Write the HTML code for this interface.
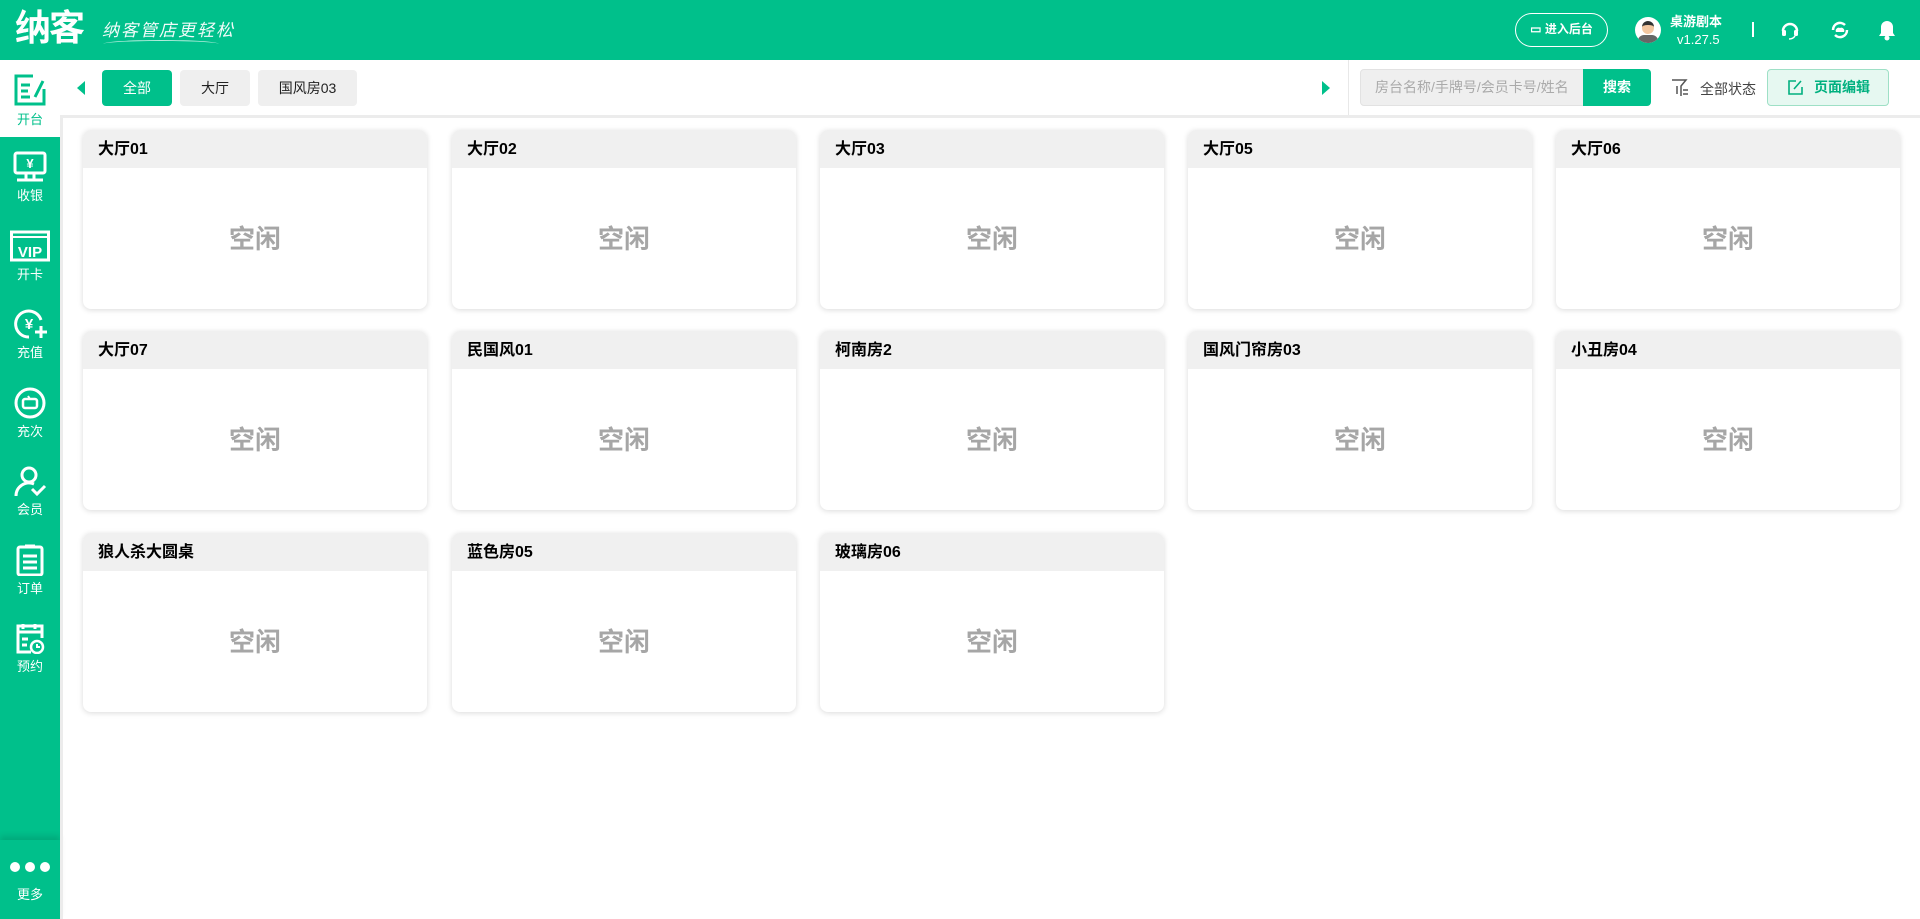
<!DOCTYPE html>
<html><head><meta charset="utf-8"><style>
*{margin:0;padding:0;box-sizing:border-box}
body{width:1920px;height:919px;overflow:hidden;background:#fff;font-family:"Liberation Sans","Noto Sans CJK SC",sans-serif;position:relative}
.hdr{position:absolute;left:0;top:0;width:1920px;height:60px;background:#00c08b;color:#fff}
.side{position:absolute;left:0;top:60px;width:60px;height:859px;background:#00c08b}
.si{position:absolute;left:0;width:60px;height:78px;text-align:center;color:#fff;font-size:13px}
.si svg{display:block;margin:6px auto 2px}
.more{position:absolute;left:0;top:840px;width:60px;height:79px;background:#00c08b;box-shadow:0 -4px 6px rgba(0,0,0,.12);text-align:center;color:#fff;font-size:13px}
.strip{position:absolute;left:60px;top:115px;width:3px;height:804px;background:#ececec}
.topline{position:absolute;left:60px;top:115px;width:1860px;height:3px;background:#ececec}
.tab{position:absolute;top:70px;height:36px;border-radius:4px;font-size:14px;line-height:36px;text-align:center;background:#efefef;color:#222}
.card{position:absolute;width:344px;height:179px;border-radius:8px;background:#fff;box-shadow:0 1px 6px rgba(0,0,0,.15);overflow:hidden}
.card .h{height:38px;background:#f0f0f0;font-weight:bold;font-size:16px;line-height:40px;padding-left:15px;color:#000}
.card .b{text-align:center;font-size:26px;font-weight:bold;color:#a6a6a6;line-height:143px}
</style></head><body>
<div class="hdr">
 <div style="position:absolute;left:15px;top:8px;font-size:36px;font-weight:bold;letter-spacing:-2px;line-height:40px">纳客</div>
 <div style="position:absolute;left:102px;top:16px;font-size:17px;font-style:italic;letter-spacing:2px;opacity:.95">纳客管店更轻松</div>
 <div style="position:absolute;left:103px;top:40px;width:116px;height:8px;border-top:1px solid rgba(255,255,255,.7);border-radius:50% 50% 0 0"></div>
 <div style="position:absolute;left:1515px;top:13px;width:93px;height:34px;border:1.5px solid #fff;border-radius:17px;font-size:12px;font-weight:bold;line-height:31px;text-align:center">▭ 进入后台</div>
 <div style="position:absolute;left:1635px;top:17px;width:26px;height:26px;border-radius:50%;background:#fff;overflow:hidden"><div style="position:absolute;left:7px;top:4px;width:12px;height:13px;border-radius:6px;background:#f2c6a0;border-top:4px solid #333"></div><div style="position:absolute;left:3px;top:18px;width:20px;height:12px;border-radius:8px;background:#666"></div></div>
 <div style="position:absolute;left:1670px;top:11px;font-size:13px;font-weight:bold">桌游剧本</div>
 <div style="position:absolute;left:1677px;top:32px;font-size:13px">v1.27.5</div>
 <div style="position:absolute;left:1752px;top:22px;width:2px;height:15px;background:#fff"></div>
 <svg style="position:absolute;left:1780px;top:20px" width="20" height="20" viewBox="0 0 20 20"><path d="M3 11a7 7 0 0114 0" stroke="#fff" stroke-width="2.5" fill="none"/><rect x="2" y="10" width="4" height="6" rx="1.5" fill="#fff"/><rect x="14" y="10" width="4" height="6" rx="1.5" fill="#fff"/><path d="M15 16q-2 3-6 3" stroke="#fff" stroke-width="1.5" fill="none"/></svg>
 <svg style="position:absolute;left:1830px;top:20px" width="20" height="20" viewBox="0 0 20 20"><path d="M3 10a7 7 0 0112-5M17 10a7 7 0 01-12 5" stroke="#fff" stroke-width="2.5" fill="none"/><path d="M6 12a3 3 0 014-4 3 3 0 014 4z" fill="#fff"/></svg>
 <svg style="position:absolute;left:1878px;top:19px" width="18" height="22" viewBox="0 0 18 22"><path d="M9 2a6 6 0 00-6 6v6l-2 3h16l-2-3V8a6 6 0 00-6-6z" fill="#fff"/><circle cx="9" cy="19" r="2.5" fill="#fff"/></svg>
</div>
<div class="side">
 <div class="si" style="top:0;background:#fff;color:#00c08b;height:77px"><svg width="34" height="34" viewBox="0 0 34 34" style="margin-top:13px"><path d="M20 3H3v28h28V16" stroke="#00c08b" stroke-width="3" fill="none"/><path d="M8 12h9M8 18h7M8 24h9M22 24l8-16" stroke="#00c08b" stroke-width="3" fill="none"/></svg>开台</div>
 <div class="si" style="top:85px"><svg width="34" height="32" viewBox="0 0 34 32"><rect x="2" y="2" width="30" height="20" rx="2" stroke="#fff" stroke-width="3" fill="none"/><text x="17" y="17" font-size="13" font-weight="bold" fill="#fff" text-anchor="middle">¥</text><path d="M13 22v6M21 22v6M4 29h26" stroke="#fff" stroke-width="3"/></svg>收银</div>
 <div class="si" style="top:164px"><svg width="40" height="32" viewBox="0 0 40 32"><rect x="1.5" y="2" width="37" height="28" stroke="#fff" stroke-width="3" fill="none"/><path d="M2 7h36" stroke="#fff" stroke-width="2"/><text x="20" y="27" font-size="15" font-weight="bold" fill="#fff" text-anchor="middle">VIP</text></svg>开卡</div>
 <div class="si" style="top:242px"><svg width="34" height="32" viewBox="0 0 34 32"><path d="M28 12A13 13 0 1016 29" stroke="#fff" stroke-width="3" fill="none"/><text x="16" y="21" font-size="15" font-weight="bold" fill="#fff" text-anchor="middle">¥</text><path d="M28 18v12M22 24h12" stroke="#fff" stroke-width="3"/></svg>充值</div>
 <div class="si" style="top:321px"><svg width="34" height="32" viewBox="0 0 34 32"><circle cx="17" cy="16" r="14" stroke="#fff" stroke-width="3" fill="none"/><rect x="10" y="12" width="14" height="9" rx="2" stroke="#fff" stroke-width="2.5" fill="none"/><path d="M15 9l2 3" stroke="#fff" stroke-width="2"/></svg>充次</div>
 <div class="si" style="top:399px"><svg width="34" height="32" viewBox="0 0 34 32"><circle cx="16" cy="10" r="7" stroke="#fff" stroke-width="3" fill="none"/><path d="M3 31a13 13 0 0118-12M19 24l5 5 8-8" stroke="#fff" stroke-width="3" fill="none"/></svg>会员</div>
 <div class="si" style="top:478px"><svg width="34" height="32" viewBox="0 0 34 32"><rect x="5" y="3" width="24" height="28" rx="2" stroke="#fff" stroke-width="3" fill="none"/><path d="M12 2h10M10 12h14M10 18h14M10 24h14" stroke="#fff" stroke-width="3"/></svg>订单</div>
 <div class="si" style="top:556px"><svg width="34" height="32" viewBox="0 0 34 32"><path d="M18 30H5V4h24v12" stroke="#fff" stroke-width="3" fill="none"/><path d="M10 2v5M22 2v5M5 10h24M9 17h6M9 23h5" stroke="#fff" stroke-width="3"/><circle cx="24" cy="25" r="6" stroke="#fff" stroke-width="2.5" fill="none"/><path d="M24 22v3h3" stroke="#fff" stroke-width="2" fill="none"/></svg>预约</div>
</div>
<div class="more"><div style="margin-top:22px;height:12px;display:flex;justify-content:center;gap:5px"><i style="width:10px;height:10px;border-radius:50%;background:#fff"></i><i style="width:10px;height:10px;border-radius:50%;background:#fff"></i><i style="width:10px;height:10px;border-radius:50%;background:#fff"></i></div><div style="margin-top:10px">更多</div></div>
<div class="topline"></div><div class="strip"></div>
<div style="position:absolute;left:77px;top:81px;width:0;height:0;border-top:7px solid transparent;border-bottom:7px solid transparent;border-right:8px solid #00c08b"></div>
<div class="tab" style="left:102px;width:70px;background:#00c08b;color:#fff">全部</div>
<div class="tab" style="left:180px;width:70px">大厅</div>
<div class="tab" style="left:258px;width:99px">国风房03</div>
<div style="position:absolute;left:1322px;top:81px;width:0;height:0;border-top:7px solid transparent;border-bottom:7px solid transparent;border-left:8px solid #00c08b"></div>
<div style="position:absolute;left:1348px;top:60px;width:1px;height:55px;background:#e8e8e8"></div>
<div style="position:absolute;left:1360px;top:69px;width:224px;height:37px;background:#efefef;border:1px solid #e2e2e2;border-radius:4px 0 0 4px;font-size:14px;color:#aaa;line-height:35px;padding-left:14px;white-space:nowrap;overflow:hidden">房台名称/手牌号/会员卡号/姓名</div>
<div style="position:absolute;left:1583px;top:69px;width:68px;height:37px;background:#00c08b;border-radius:0 4px 4px 0;color:#fff;font-size:14px;font-weight:bold;line-height:37px;text-align:center">搜索</div>
<svg style="position:absolute;left:1671px;top:78px" width="18" height="20" viewBox="0 0 18 20"><path d="M1 2h14l-5 6v10" stroke="#555" stroke-width="1.5" fill="none"/><path d="M6 8v8M12 12h5M12 16h5" stroke="#555" stroke-width="1.5"/></svg>
<div style="position:absolute;left:1700px;top:79px;font-size:14px;color:#444">全部状态</div>
<div style="position:absolute;left:1767px;top:69px;width:122px;height:37px;background:#e6f8f1;border:1px solid #9ee0c6;border-radius:4px;color:#00b07f;font-size:14px;font-weight:bold;line-height:35px;padding-left:20px"><svg style="vertical-align:-3px;margin-right:11px" width="15" height="15" viewBox="0 0 15 15"><path d="M8 1H1v13h13V7M6 9l7-8" stroke="#00b07f" stroke-width="1.6" fill="none"/></svg>页面编辑</div>
<div class="card" style="left:83px;top:130px"><div class="h">大厅01</div><div class="b">空闲</div></div>
<div class="card" style="left:452px;top:130px"><div class="h">大厅02</div><div class="b">空闲</div></div>
<div class="card" style="left:820px;top:130px"><div class="h">大厅03</div><div class="b">空闲</div></div>
<div class="card" style="left:1188px;top:130px"><div class="h">大厅05</div><div class="b">空闲</div></div>
<div class="card" style="left:1556px;top:130px"><div class="h">大厅06</div><div class="b">空闲</div></div>
<div class="card" style="left:83px;top:331px"><div class="h">大厅07</div><div class="b">空闲</div></div>
<div class="card" style="left:452px;top:331px"><div class="h">民国风01</div><div class="b">空闲</div></div>
<div class="card" style="left:820px;top:331px"><div class="h">柯南房2</div><div class="b">空闲</div></div>
<div class="card" style="left:1188px;top:331px"><div class="h">国风门帘房03</div><div class="b">空闲</div></div>
<div class="card" style="left:1556px;top:331px"><div class="h">小丑房04</div><div class="b">空闲</div></div>
<div class="card" style="left:83px;top:533px"><div class="h">狼人杀大圆桌</div><div class="b">空闲</div></div>
<div class="card" style="left:452px;top:533px"><div class="h">蓝色房05</div><div class="b">空闲</div></div>
<div class="card" style="left:820px;top:533px"><div class="h">玻璃房06</div><div class="b">空闲</div></div>
</body></html>
